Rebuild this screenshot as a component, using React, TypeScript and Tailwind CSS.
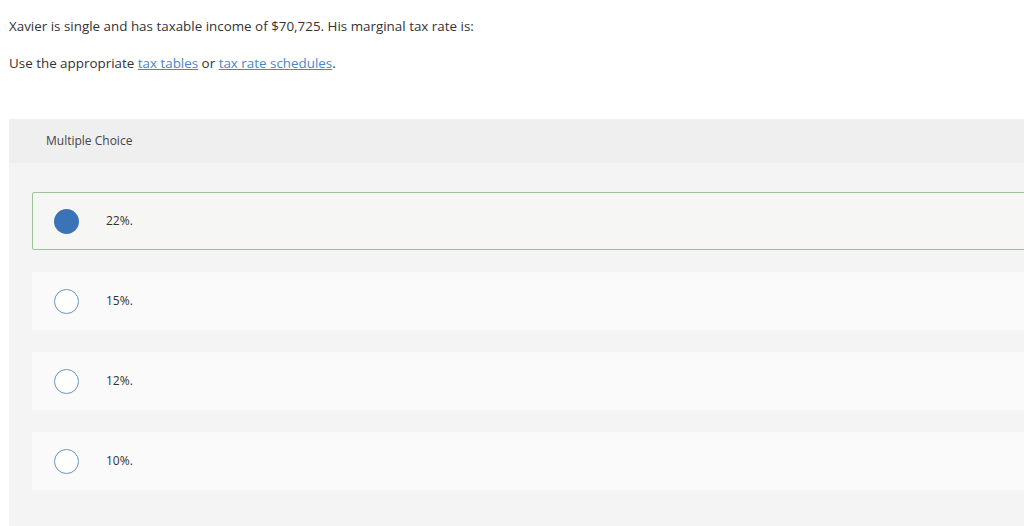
const options = [
  { label: '22%.', selected: true },
  { label: '15%.', selected: false },
  { label: '12%.', selected: false },
  { label: '10%.', selected: false },
]

export default function App() {
  return (
    <div
      className="w-[1024px] h-[526px] overflow-hidden bg-white text-[#333]"
      style={{ fontFamily: '"Open Sans", Lato, Arial, sans-serif' }}
    >
      {/* Question */}
      <div className="pl-[9px] pt-[17px] text-[13.4px] leading-[18px]">
        <p>Xavier is single and has taxable income of $70,725. His marginal tax rate is:</p>
        <p className="mt-[19px]">
          Use the appropriate{' '}
          <a className="text-[#4a86c5] underline">tax tables</a> or{' '}
          <a className="text-[#4a86c5] underline">tax rate schedules</a>.
        </p>
      </div>

      {/* Answer panel */}
      <div className="ml-[9px] mt-[47px] w-[1100px] bg-[#f4f4f4]">
        <div className="h-[44px] bg-[#efefef] pl-[37px] flex items-center text-[12px] text-[#444]">
          Multiple Choice
        </div>
        <div className="pl-[23px] pt-[29px] pb-[40px] flex flex-col gap-[22px]">
          {options.map((o) => (
            <div
              key={o.label}
              className={
                o.selected
                  ? 'h-[58px] flex items-center border border-[#9cc497] bg-[#f6f7f5] rounded-[2px] pl-[21px]'
                  : 'h-[58px] flex items-center bg-[#fafafa] pl-[22px]'
              }
            >
              <span
                className={
                  o.selected
                    ? 'w-[25px] h-[25px] rounded-full bg-[#3a73b8]'
                    : 'w-[25px] h-[25px] rounded-full border-[1.5px] border-[#6a93bf] bg-white'
                }
              />
              <span className="ml-[27px] text-[12px] text-[#333]">{o.label}</span>
            </div>
          ))}
        </div>
      </div>
    </div>
  )
}
